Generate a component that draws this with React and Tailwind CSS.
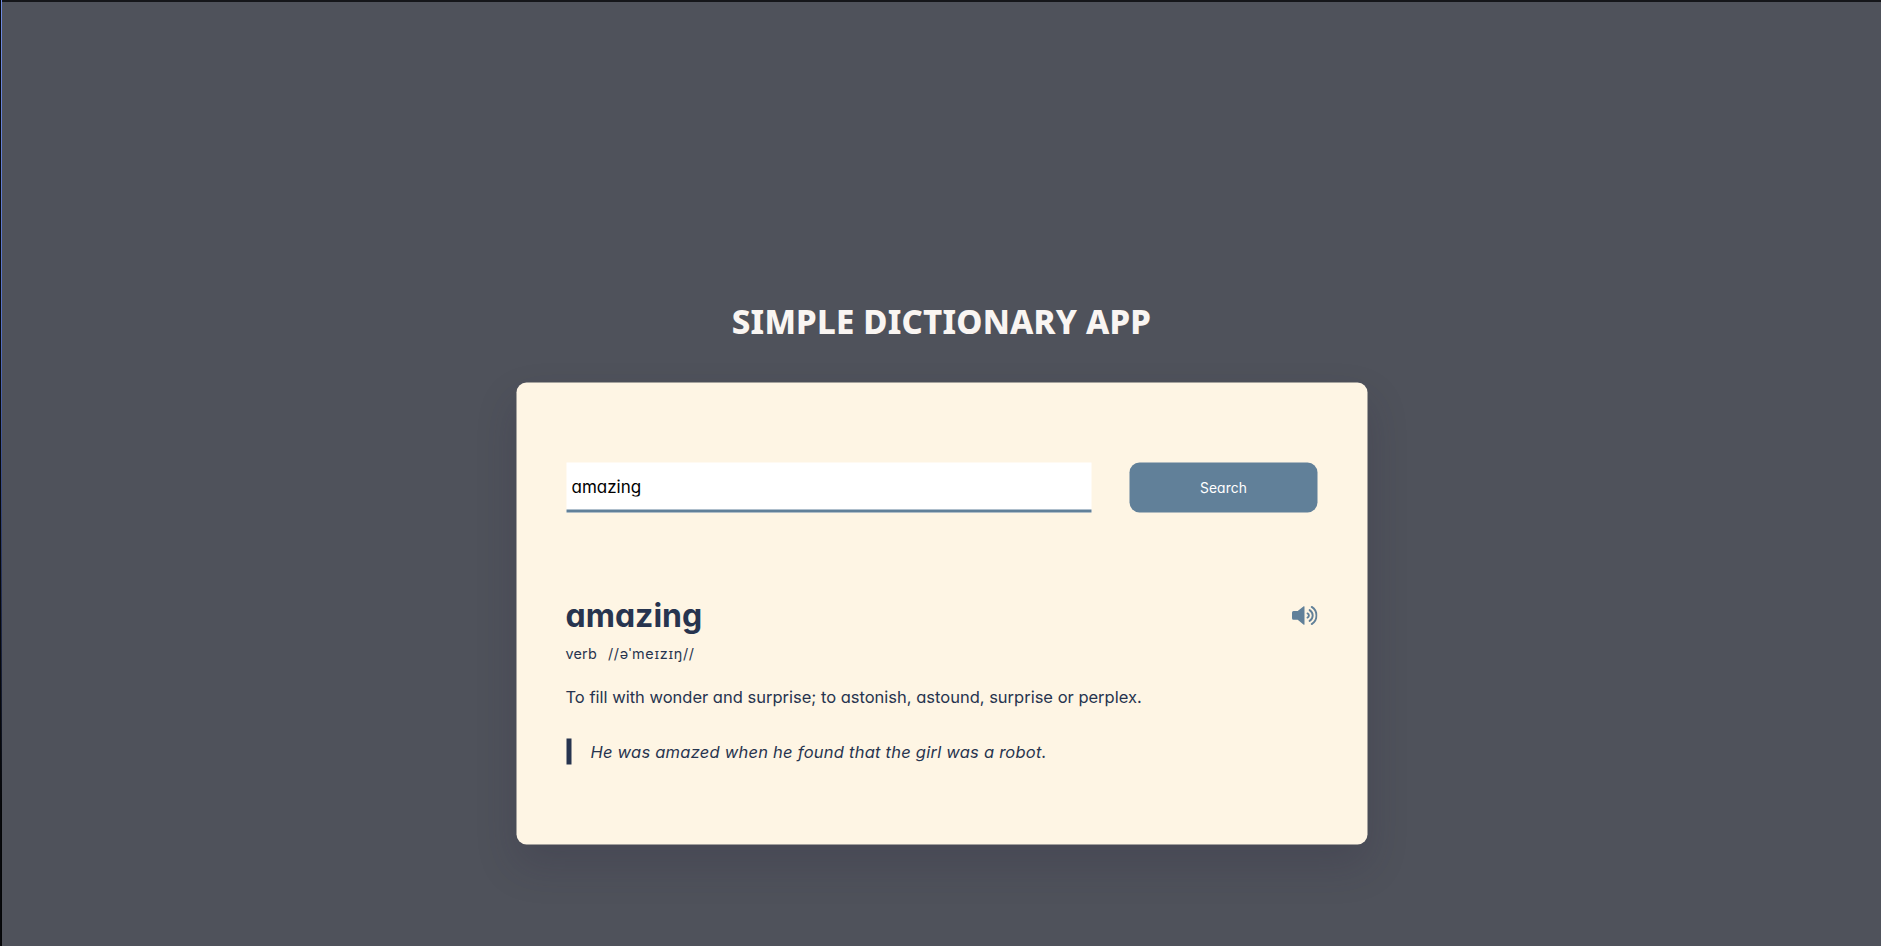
import { useState } from "react";

function SpeakerIcon() {
  return (
    <svg className="block h-5 w-[26px]" viewBox="0 0 26 20" fill="none" stroke="#618099" strokeWidth="1.9" strokeLinecap="round">
      <path d="M0.5 7.2Q0.5 5.6 2 5.6H6.2L12.2 0.8Q13 0.3 13 1.3V18.7Q13 19.7 12.2 19.2L6.2 14.2H2Q0.5 14.2 0.5 12.7Z" fill="#618099" stroke="none" />
      <path d="M16 7.9Q17.4 8.6 17.4 10T16 12.1" />
      <path d="M18.1 4.6Q21.2 6.6 21.2 10T18.1 15.4" />
      <path d="M20.2 1.4Q25 4.5 25 10T20.2 18.6" />
    </svg>
  );
}

export default function App() {
  const [word, setWord] = useState("amazing");

  return (
    <div className="flex h-[946px] w-full bg-[#4f525b]">
      <div className="w-0.5 border-l border-[#08090c] bg-[linear-gradient(#6f8be0,#5571c4_35%,#1f2a4c_65%,#050608_85%)]" />
      <div className="flex flex-1 flex-col items-center border-t-2 border-[#15161a] font-['Inter','Noto_Sans',sans-serif] [font-feature-settings:'cv11']">
        <h1 className="mt-[296px] h-12 whitespace-nowrap font-['Noto_Sans',sans-serif] text-[33px] leading-[48px] font-extrabold tracking-[0.2px] text-[#f9f5f2]">
          SIMPLE DICTIONARY APP
        </h1>
        <main className="mt-[37px] h-[462px] w-[851px] translate-x-[0.5px] -translate-y-[0.5px] rounded-[10px] bg-[#fef5e4] px-[50px] pt-20 shadow-[0_20px_40px_rgba(38,33,61,0.2)]">
          <div className="flex justify-between">
            <input
              type="text"
              value={word}
              onChange={(e) => setWord(e.target.value)}
              className="h-[50px] w-[525px] border-b-3 border-[#618099] bg-white px-[5px] pt-px text-[17px] font-[370] text-black outline-none"
            />
            <button className="h-[50px] w-[188px] rounded-[10px] bg-[#618099] text-[13.8px] tracking-[0.15px] text-white">Search</button>
          </div>
          <div className="mt-[79px] flex h-12 items-center justify-between">
            <h2 className="-ml-px text-[32px] leading-[48px] font-bold text-[#27344f]">{word}</h2>
            <button aria-label="Play pronunciation">
              <SpeakerIcon />
            </button>
          </div>
          <div className="-ml-px mt-[3px] flex h-[22px] gap-[11px] text-[14.4px] leading-[22px] font-[370] text-[#27344f]">
            <p className="tracking-[0.2px]">verb</p>
            <p className="tracking-[0.7px]">//əˈmeɪzɪŋ//</p>
          </div>
          <p className="-ml-px mt-5 h-6 whitespace-nowrap text-[16.5px] leading-6 font-[370] text-[#27344f]">
            <span>To fill with wonder and surprise; to astonish, astound, surprise or perplex.</span>
          </p>
          <p className="mt-[30px] h-[26px] border-l-[5px] border-[#27344f] pl-[19px] text-[16.5px] leading-[26px] font-[370] tracking-[0.24px] whitespace-nowrap text-[#27344f] italic">
            <span>He was amazed when he found that the girl was a robot.</span>
          </p>
        </main>
      </div>
    </div>
  );
}
